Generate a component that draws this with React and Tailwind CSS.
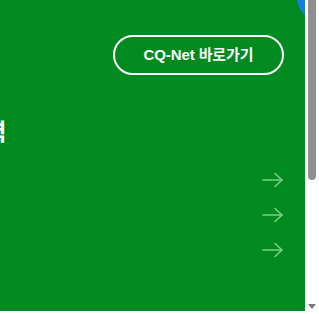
import React from "react";

function Arrow() {
  return (
    <svg width="22" height="16" viewBox="0 0 22 16" fill="none" stroke="#7ccf86" strokeWidth="1.6" strokeLinecap="round" strokeLinejoin="round">
      <path d="M1 8 H20" />
      <path d="M13 1.5 L20 8 L13 14.5" />
    </svg>
  );
}

export default function App() {
  return (
    <div className="flex w-[319px] h-[314px] bg-white overflow-hidden" style={{ fontFamily: '"Noto Sans CJK KR", "Noto Sans", sans-serif' }}>
      <div className="relative w-[305px] h-[311px] bg-[#008a1f] overflow-hidden shrink-0">
        <div className="absolute left-[297px] top-[-28px] w-[50px] h-[50px] rounded-full bg-[#1a7de0]" />
        <div className="flex justify-end pt-[35px] pr-[21px]">
          <div className="flex items-center justify-center w-[171px] h-[40px] rounded-full border-2 border-white text-white text-[15px] font-semibold tracking-[-0.1px]" style={{ fontFamily: '"Liberation Sans", "Noto Sans CJK KR", sans-serif' }}>
            CQ-Net 바로가기
          </div>
        </div>
        <div className="mt-[40px] ml-[-36px] text-white text-[23px] font-bold leading-[30px] whitespace-nowrap">
          경력
        </div>
        <div className="flex flex-col items-end pr-[21px] mt-[27px] gap-[19px]">
          <Arrow />
          <Arrow />
          <Arrow />
        </div>
      </div>
      <div className="flex flex-col justify-between w-[14px] h-[314px] bg-white pl-[3px]">
        <div className="w-[8px] h-[180px] bg-[#8f8f8f] rounded-b-[4px]" />
        <div className="mb-[5px] w-0 h-0 border-l-[4px] border-r-[4px] border-t-[5px] border-l-transparent border-r-transparent border-t-[#7a7a7a]" />
      </div>
    </div>
  );
}
